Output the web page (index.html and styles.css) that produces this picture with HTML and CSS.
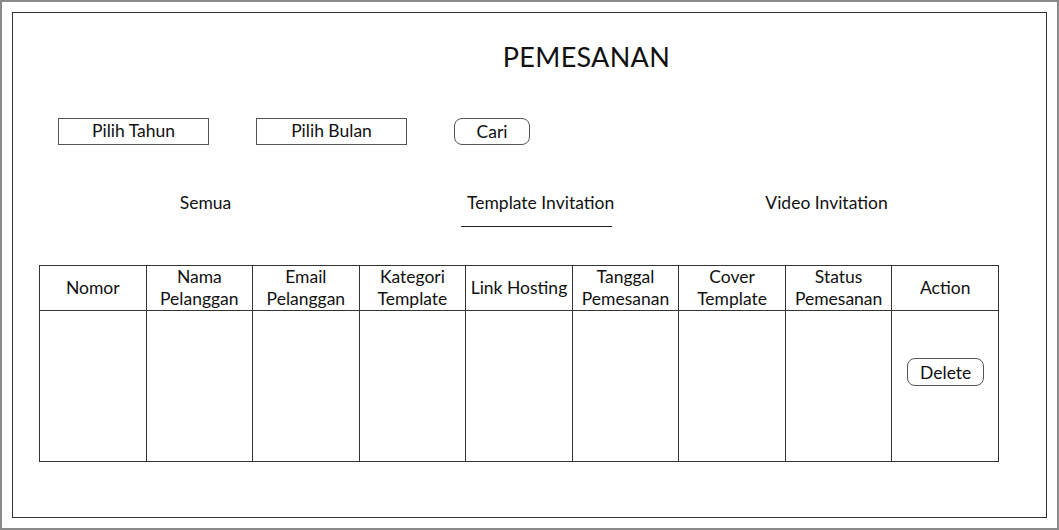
FILE: index.html
```html
<!DOCTYPE html>
<html lang="en">
<head>
  <meta charset="UTF-8" />
  <title>Pemesanan</title>
  <link rel="stylesheet" href="styles.css">
</head>
<body>
  <div class="frame">
    <div class="panel">
      <h1 class="title">PEMESANAN</h1>

      <div class="filters">
        <div class="select">Pilih Tahun</div>
        <div class="select">Pilih Bulan</div>
        <button class="btn">Cari</button>
      </div>

      <div class="tabs">
        <div class="tab tab-all">Semua</div>
        <div class="tab tab-template active">Template Invitation</div>
        <div class="tab tab-video">Video Invitation</div>
      </div>

      <table class="orders">
        <thead>
          <tr>
            <th>Nomor</th>
            <th>Nama<br>Pelanggan</th>
            <th>Email<br>Pelanggan</th>
            <th>Kategori<br>Template</th>
            <th>Link Hosting</th>
            <th>Tanggal<br>Pemesanan</th>
            <th>Cover<br>Template</th>
            <th>Status<br>Pemesanan</th>
            <th>Action</th>
          </tr>
        </thead>
        <tbody>
          <tr>
            <td></td><td></td><td></td><td></td><td></td><td></td><td></td><td></td>
            <td class="action"><button class="btn btn-delete">Delete</button></td>
          </tr>
        </tbody>
      </table>
    </div>
  </div>
</body>
</html>
```

FILE: styles.css
```css
body {
  margin: 0;
  font-family: Lato, 'Open Sans', sans-serif;
  color: #111;
  background: #fff;
}

.frame {
  width: 1059px;
  height: 530px;
  box-sizing: border-box;
  border: 2px solid #8a8a8a;
  padding: 10px;
}

.panel {
  height: 506px;
  box-sizing: border-box;
  border: 1px solid #333;
}

.title {
  margin: 0;
  padding: 26px 0 0 114px;
  text-align: center;
  font-size: 27px;
  font-weight: normal;
  line-height: 36px;
  letter-spacing: 0.3px;
}

.filters {
  display: flex;
  gap: 47px;
  padding-left: 45px;
  margin-top: 43px;
}

.select, .btn {
  box-sizing: border-box;
  height: 27px;
  font-family: inherit;
  font-size: 17.5px;
  line-height: 23px;
  text-align: center;
  color: #111;
  background: #fff;
  padding: 0;
}

.select {
  width: 151px;
  border: 1px solid #555;
}

.btn {
  width: 76px;
  border: 1px solid #555;
  border-radius: 8px;
}

.tabs {
  display: flex;
  margin-top: 44px;
  padding-left: 117px;
  font-size: 17.5px;
}

.tab {
  width: 151px;
  height: 38px;
  box-sizing: border-box;
  line-height: 27px;
  text-align: center;
}

.tab-template {
  margin-left: 180px;
  padding-left: 6px;
  border-bottom: 1px solid #222;
  white-space: nowrap;
}

.tab-video {
  margin-left: 139px;
  white-space: nowrap;
}

.orders {
  margin: 38px 0 0 26px;
  width: 960px;
  border-collapse: collapse;
  table-layout: fixed;
  font-size: 17.5px;
}

.orders th, .orders td {
  border: 1px solid #333;
  padding: 0;
  text-align: center;
}

.orders th {
  height: 44px;
  font-weight: normal;
  line-height: 22px;
}

.orders td {
  height: 150px;
}

.orders td.action {
  vertical-align: top;
}

.btn-delete {
  width: 77px;
  height: 28px;
  margin: 47px 0 0 1px;
}
```
